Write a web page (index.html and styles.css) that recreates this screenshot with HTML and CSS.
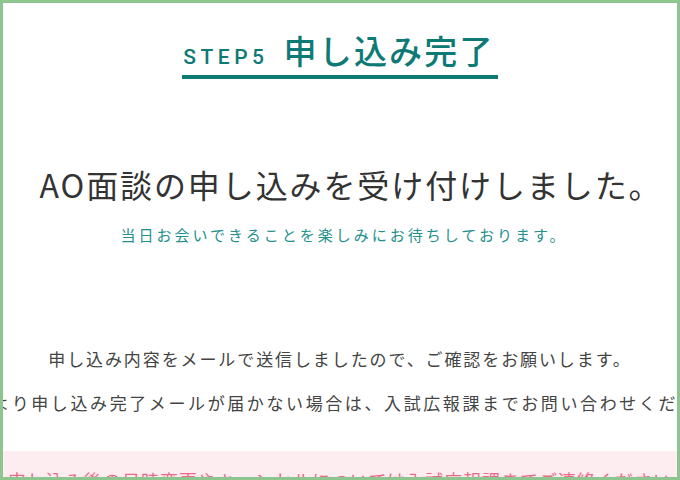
FILE: index.html
```html
<!DOCTYPE html>
<html lang="ja">
<head>
<meta charset="utf-8">
<title>STEP5 申し込み完了</title>
<link rel="stylesheet" href="styles.css">
</head>
<body>
<div class="frame">
  <div class="title-wrap">
    <h1 class="title"><span class="step">STEP5</span><span class="title-text">申し込み完了</span></h1>
  </div>
  <p class="lead">AO面談の申し込みを受け付けしました。</p>
  <p class="sub">当日お会いできることを楽しみにお待ちしております。</p>
  <div class="line line-first"><span>申し込み内容をメールで送信しましたので、ご確認をお願いします。</span></div>
  <div class="line line-second"><span>本学より申し込み完了メールが届かない場合は、入試広報課までお問い合わせください。</span></div>
  <div class="notice">
    <div class="line notice-line"><span>申し込み後の日時変更やキャンセルについては入試広報課までご連絡ください</span></div>
  </div>
</div>
</body>
</html>
```

FILE: styles.css
```css
html, body {
  margin: 0;
  padding: 0;
  background: #ffffff;
}

body {
  font-family: "Noto Sans CJK JP", "Noto Sans", sans-serif;
}

.frame {
  width: 680px;
  height: 480px;
  box-sizing: border-box;
  border: 3px solid #8cc68e;
  overflow: hidden;
  background: #ffffff;
  padding-top: 29px;
}

.title-wrap {
  display: flex;
  justify-content: center;
}

.title {
  margin: 0;
  display: flex;
  align-items: baseline;
  gap: 15px;
  padding: 0 3px 7px 1px;
  border-bottom: 4px solid #0d7a76;
  color: #0d7a76;
  font-weight: 500;
  line-height: 36px;
}

.step {
  font-family: Roboto, "Liberation Sans", sans-serif;
  font-size: 21px;
  line-height: 1;
  font-weight: 500;
  letter-spacing: 4.5px;
}

.title-text {
  font-size: 33px;
  letter-spacing: 2.2px;
}

.lead {
  margin: 83px 0 0;
  padding-left: 22px;
  text-align: center;
  font-size: 32px;
  line-height: 44px;
  letter-spacing: 1.9px;
  color: #333333;
  font-weight: 400;
}

.sub {
  margin: 17px 0 0;
  padding-left: 8px;
  text-align: center;
  font-size: 15px;
  line-height: 24px;
  letter-spacing: 3px;
  color: #23908c;
}

.line {
  display: flex;
  justify-content: center;
  white-space: nowrap;
  font-size: 17px;
  line-height: 26px;
  letter-spacing: 1.9px;
  color: #444444;
}

.line span {
  flex: none;
}

.line-first {
  margin-top: 99px;
}

.line-second {
  margin-top: 18px;
  padding-left: 10px;
  letter-spacing: 2.6px;
}

.notice {
  margin-top: 35px;
  background: #fdedf0;
  padding: 16px 0;
}

.notice-line {
  color: #e96c86;
  font-size: 18px;
  letter-spacing: 1px;
}
```
